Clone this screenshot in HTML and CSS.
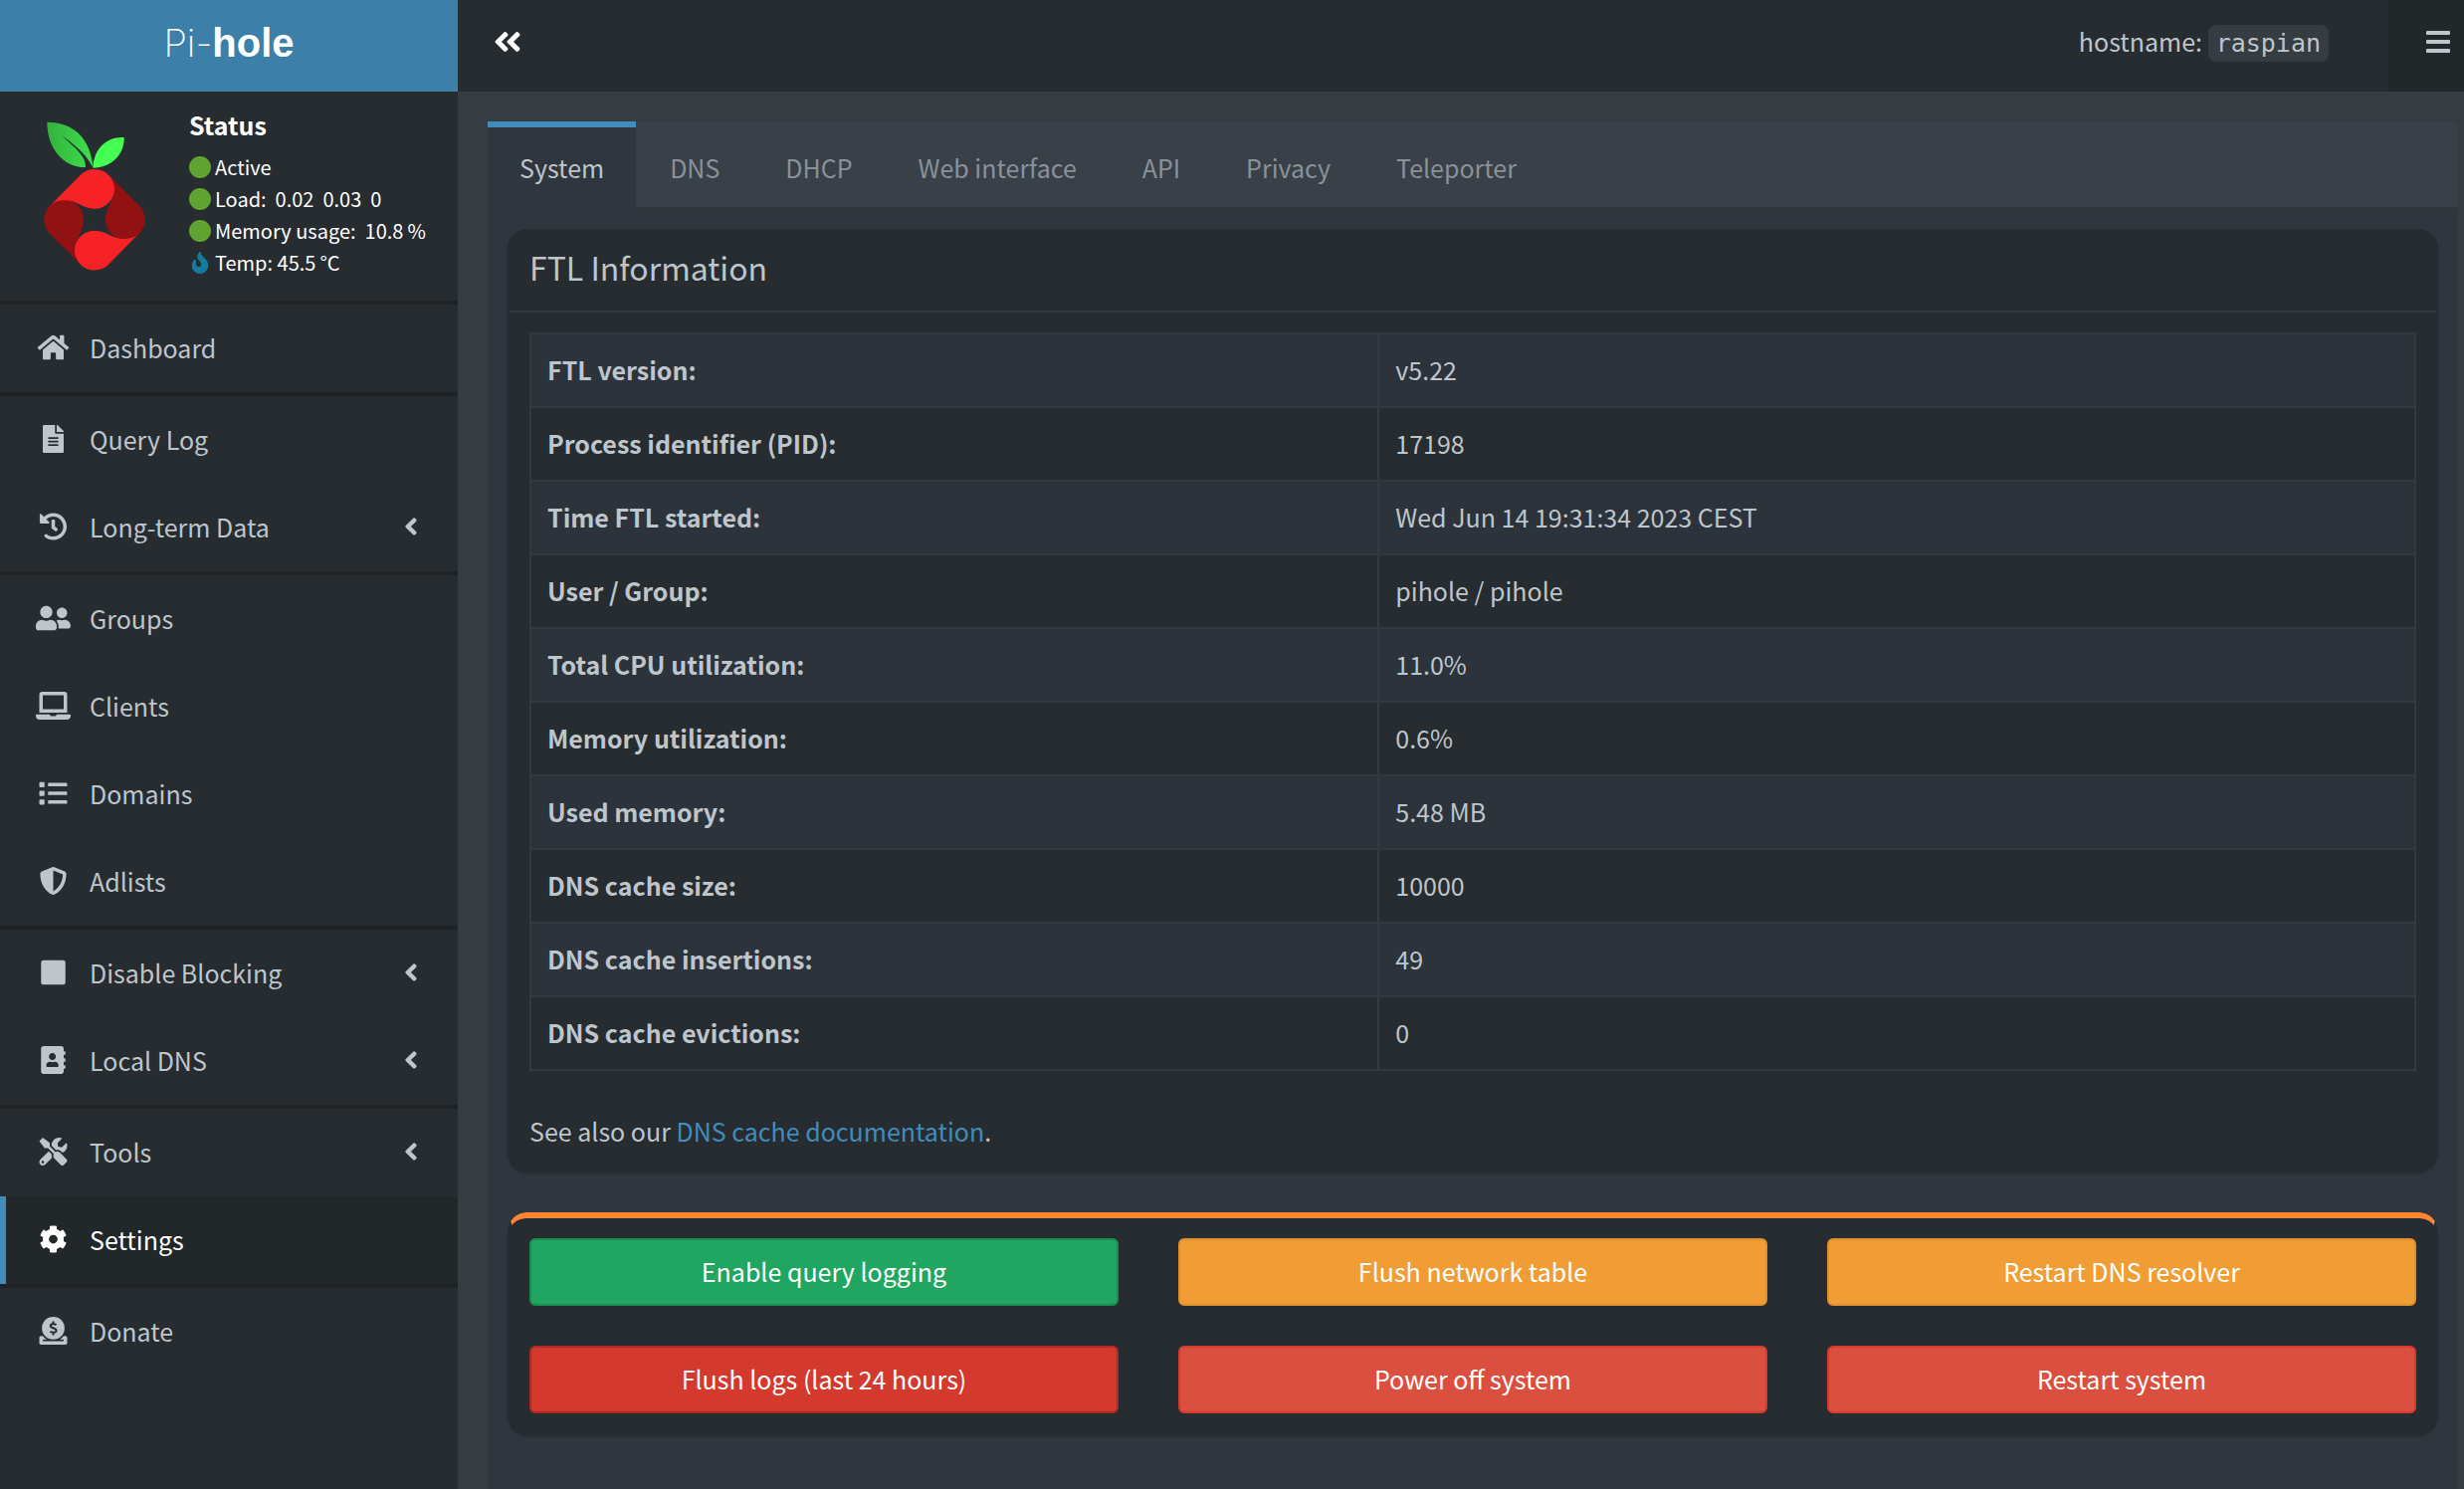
FILE: index.html
```html
<!DOCTYPE html>
<html lang="en">
<head>
  <meta charset="UTF-8" />
  <meta name="viewport" content="width=device-width, initial-scale=1.0">
  <title>Pi-hole - Settings</title>
  <link rel="stylesheet" href="styles.css">
</head>
<body>
  <!-- Shared icons -->
  <svg class="sprite" aria-hidden="true">
    <symbol id="angle-left" viewBox="0 0 256 512">
      <path d="M31.7 239l136-136c9.4-9.4 24.6-9.4 33.9 0l22.6 22.6c9.4 9.4 9.4 24.6 0 33.9L127.9 256l96.4 96.4c9.4 9.4 9.4 24.6 0 33.9L201.7 409c-9.4 9.4-24.6 9.4-33.9 0l-136-136c-9.5-9.4-9.5-24.6-.1-34z"/>
    </symbol>
  </svg>

  <aside class="sidebar">
    <a href="#" class="logo"><span class="logo-thin">Pi-</span><b>hole</b></a>

    <div class="user-panel">
      <svg class="berry" viewBox="0 0 306 450" role="img" aria-label="Pi-hole logo">
        <defs>
          <linearGradient id="leaf">
            <stop offset="0" stop-color="#34b13c"/>
            <stop offset="1" stop-color="#3de04c"/>
          </linearGradient>
          <path id="petal" d="M-135-41L-42-135A60 60 0 0 1 60-93A60 60 0 0 1 0-33C-40-34-50-58-93-58Q-118-58-135-41Z"/>
        </defs>
        <path fill="url(#leaf)" d="M10 2C88 2 142 50 148 139C134 108 100 74 53 42C90 76 128 104 126 138C62 140 10 84 10 2Z"/>
        <path fill="#43ff52" d="M148 140C150 84 188 45 242 48C244 100 203 140 148 140Z"/>
        <g transform="translate(153 296)">
          <use href="#petal" fill="#921113" transform="rotate(90)"/>
          <use href="#petal" fill="#921113" transform="rotate(270)"/>
          <use href="#petal" fill="#f62226"/>
          <use href="#petal" fill="#f62226" transform="rotate(180)"/>
        </g>
      </svg>
      <div class="status">
        <p class="status-title">Status</p>
        <p><i class="dot"></i>Active</p>
        <p><i class="dot"></i>Load:&nbsp;&nbsp;0.02&nbsp;&nbsp;0.03&nbsp;&nbsp;0</p>
        <p><i class="dot"></i>Memory usage:&nbsp;&nbsp;10.8&thinsp;%</p>
        <p><svg class="fire" viewBox="0 0 384 512"><path d="M216 23.86c0-23.8-30.65-32.77-44.15-13.04C48 191.85 224 200 224 288c0 35.63-29.11 64.46-64.85 63.99-35.17-.45-63.15-29.77-63.15-64.94v-85.51c0-21.7-26.47-32.23-41.43-16.5C27.8 213.16 0 261.33 0 320c0 105.87 86.13 192 192 192s192-86.13 192-192c0-170.29-168-193-168-296.14z"/></svg>Temp: 45.5&thinsp;&deg;C</p>
      </div>
    </div>

    <nav>
      <ul class="menu">
        <li><a href="#"><svg viewBox="0 0 576 512"><path d="M280.37 148.26L96 300.11V464a16 16 0 0 0 16 16l112.06-.29a16 16 0 0 0 15.92-16V368a16 16 0 0 1 16-16h64a16 16 0 0 1 16 16v95.64a16 16 0 0 0 16 16.05L464 480a16 16 0 0 0 16-16V300L295.67 148.26a12.19 12.19 0 0 0-15.3 0zM571.6 251.47L488 182.56V44.05a12 12 0 0 0-12-12h-56a12 12 0 0 0-12 12v72.61L318.47 43a48 48 0 0 0-61 0L4.34 251.47a12 12 0 0 0-1.6 16.9l25.5 31A12 12 0 0 0 45.15 301l235.22-193.74a12.19 12.19 0 0 1 15.3 0L530.9 301a12 12 0 0 0 16.9-1.6l25.5-31a12 12 0 0 0-1.7-16.93z"/></svg><span>Dashboard</span></a></li>
      </ul>
      <ul class="menu">
        <li><a href="#"><svg viewBox="0 0 384 512"><path d="M224 136V0H24C10.7 0 0 10.7 0 24v464c0 13.3 10.7 24 24 24h336c13.3 0 24-10.7 24-24V160H248c-13.2 0-24-10.8-24-24zm64 236c0 6.6-5.4 12-12 12H108c-6.6 0-12-5.4-12-12v-8c0-6.6 5.4-12 12-12h168c6.6 0 12 5.4 12 12v8zm0-64c0 6.6-5.4 12-12 12H108c-6.6 0-12-5.4-12-12v-8c0-6.6 5.4-12 12-12h168c6.6 0 12 5.4 12 12v8zm0-72v8c0 6.6-5.4 12-12 12H108c-6.6 0-12-5.4-12-12v-8c0-6.6 5.4-12 12-12h168c6.6 0 12 5.4 12 12zm96-114.1v6.1H256V0h6.1c6.4 0 12.5 2.5 17 7l97.9 98c4.5 4.5 7 10.6 7 16.9z"/></svg><span>Query Log</span></a></li>
        <li><a href="#"><svg viewBox="0 0 512 512"><path d="M504 255.531c.253 136.64-111.18 248.372-247.82 248.468-59.015.042-113.223-20.53-155.822-54.911-11.077-8.94-11.905-25.541-1.839-35.607l11.267-11.267c8.609-8.609 22.353-9.551 31.891-1.984C173.062 425.135 212.781 440 256 440c101.705 0 184-82.311 184-184 0-101.705-82.311-184-184-184-48.814 0-93.149 18.969-126.068 49.932l50.754 50.754c10.08 10.08 2.941 27.314-11.313 27.314H24c-8.837 0-16-7.163-16-16V38.627c0-14.254 17.234-21.393 27.314-11.314l49.372 49.372C129.209 34.136 189.552 8 256 8c136.81 0 247.747 110.78 248 247.531zm-180.912 78.784l9.823-12.63c8.138-10.463 6.253-25.542-4.21-33.679L288 256.349V152c0-13.255-10.745-24-24-24h-16c-13.255 0-24 10.745-24 24v135.651l65.409 50.874c10.463 8.137 25.541 6.253 33.679-4.21z"/></svg><span>Long-term Data</span><svg class="caret"><use href="#angle-left"/></svg></a></li>
      </ul>
      <ul class="menu">
        <li><a href="#"><svg viewBox="0 0 640 512"><path d="M192 256c61.9 0 112-50.1 112-112S253.9 32 192 32 80 82.1 80 144s50.1 112 112 112zm76.8 32h-8.3c-20.8 10-43.9 16-68.5 16s-47.6-6-68.5-16h-8.3C51.6 288 0 339.6 0 403.2V432c0 26.5 21.5 48 48 48h288c26.5 0 48-21.5 48-48v-28.8c0-63.6-51.6-115.2-115.2-115.2zM480 256c53 0 96-43 96-96s-43-96-96-96-96 43-96 96 43 96 96 96zm48 32h-3.8c-13.9 4.8-28.6 8-44.2 8s-30.3-3.2-44.2-8H432c-20.4 0-39.2 5.9-55.7 15.4 24.4 26.3 39.7 61.2 39.7 99.8v38.4c0 2.2-.5 4.3-.6 6.4H592c26.5 0 48-21.5 48-48 0-61.9-50.1-112-112-112z"/></svg><span>Groups</span></a></li>
        <li><a href="#"><svg viewBox="0 0 640 512"><path d="M624 416H381.54c-.74 19.81-14.71 32-32.74 32H288c-18.69 0-33.02-17.47-32.77-32H16c-8.8 0-16 7.2-16 16v16c0 35.2 28.8 64 64 64h512c35.2 0 64-28.8 64-64v-16c0-8.8-7.2-16-16-16zM576 48c0-26.4-21.6-48-48-48H112C85.6 0 64 21.6 64 48v336h512V48zm-64 272H128V64h384v256z"/></svg><span>Clients</span></a></li>
        <li><a href="#"><svg viewBox="0 0 512 512"><path d="M80 368H16a16 16 0 0 0-16 16v64a16 16 0 0 0 16 16h64a16 16 0 0 0 16-16v-64a16 16 0 0 0-16-16zm0-320H16A16 16 0 0 0 0 64v64a16 16 0 0 0 16 16h64a16 16 0 0 0 16-16V64a16 16 0 0 0-16-16zm0 160H16a16 16 0 0 0-16 16v64a16 16 0 0 0 16 16h64a16 16 0 0 0 16-16v-64a16 16 0 0 0-16-16zm416 176H176a16 16 0 0 0-16 16v32a16 16 0 0 0 16 16h320a16 16 0 0 0 16-16v-32a16 16 0 0 0-16-16zm0-320H176a16 16 0 0 0-16 16v32a16 16 0 0 0 16 16h320a16 16 0 0 0 16-16V80a16 16 0 0 0-16-16zm0 160H176a16 16 0 0 0-16 16v32a16 16 0 0 0 16 16h320a16 16 0 0 0 16-16v-32a16 16 0 0 0-16-16z"/></svg><span>Domains</span></a></li>
        <li><a href="#"><svg viewBox="0 0 512 512"><path d="M466.5 83.7l-192-80a48.15 48.15 0 0 0-36.9 0l-192 80C27.7 91.1 16 108.6 16 128c0 198.5 114.5 335.7 221.5 380.3 11.8 4.9 25.1 4.9 36.9 0C360.1 472.6 496 349.3 496 128c0-19.4-11.7-36.9-29.5-44.3zM256.1 446.3l-.1-381 175.9 73.3c-3.3 151.4-82.1 261.1-175.8 307.7z"/></svg><span>Adlists</span></a></li>
      </ul>
      <ul class="menu">
        <li><a href="#"><svg viewBox="0 0 448 512"><rect y="32" width="448" height="448" rx="48"/></svg><span>Disable Blocking</span><svg class="caret"><use href="#angle-left"/></svg></a></li>
        <li><a href="#"><svg viewBox="0 0 448 512"><path d="M436 160c6.6 0 12-5.4 12-12v-40c0-6.6-5.4-12-12-12h-20V48c0-26.5-21.5-48-48-48H48C21.5 0 0 21.5 0 48v416c0 26.5 21.5 48 48 48h320c26.5 0 48-21.5 48-48v-48h20c6.6 0 12-5.4 12-12v-40c0-6.6-5.4-12-12-12h-20v-64h20c6.6 0 12-5.4 12-12v-40c0-6.6-5.4-12-12-12h-20v-64h20zm-228-32c35.3 0 64 28.7 64 64s-28.7 64-64 64-64-28.7-64-64 28.7-64 64-64zm112 236.8c0 10.6-10 19.2-22.4 19.2H118.4C106 384 96 375.4 96 364.8v-19.2c0-31.8 30.1-57.6 67.2-57.6h5c12.3 5.1 25.7 8 39.8 8s27.6-2.9 39.8-8h5c37.1 0 67.2 25.8 67.2 57.6v19.2z"/></svg><span>Local DNS</span><svg class="caret"><use href="#angle-left"/></svg></a></li>
      </ul>
      <ul class="menu">
        <li><a href="#"><svg viewBox="0 0 512 512"><path d="M501.1 395.7L384 278.6c-23.1-23.1-57.6-27.6-85.4-13.9L192 158.1V96L64 0 0 64l96 128h62.1l106.6 106.6c-13.6 27.8-9.2 62.3 13.9 85.4l117.1 117.1c14.6 14.6 38.2 14.6 52.7 0l52.7-52.7c14.5-14.6 14.5-38.2 0-52.7zM331.7 225c28.3 0 54.9 11 74.9 31l19.4 19.4c15.8-6.9 30.8-16.5 43.8-29.5 37.1-37.1 49.7-89.3 37.9-136.7-2.2-9-13.5-12.1-20.1-5.5l-74.4 74.4-67.9-11.3L334 98.9l74.4-74.4c6.6-6.6 3.4-17.9-5.7-20.2-47.4-11.7-99.6.9-136.6 37.9-28.5 28.5-41.9 66.1-41.2 103.6l82.1 82.1c8.1-1.9 16.5-2.9 24.7-2.9zm-103.9 82l-56.7-56.7L18.7 402.8c-25 25-25 65.5 0 90.5s65.5 25 90.5 0l123.6-123.6c-7.6-19.9-9.9-41.6-5-62.7zM64 472c-13.2 0-24-10.8-24-24 0-13.3 10.7-24 24-24s24 10.7 24 24c0 13.2-10.7 24-24 24z"/></svg><span>Tools</span><svg class="caret"><use href="#angle-left"/></svg></a></li>
        <li class="active"><a href="#"><svg viewBox="0 0 512 512"><path d="M487.4 315.7l-42.6-24.6c4.3-23.2 4.3-47 0-70.2l42.6-24.6c4.9-2.8 7.1-8.6 5.5-14-11.1-35.6-30-67.8-54.7-94.6-3.8-4.1-10-5.1-14.8-2.3L380.8 110c-17.9-15.4-38.5-27.3-60.8-35.1V25.8c0-5.6-3.9-10.5-9.4-11.7-36.7-8.2-74.3-7.8-109.2 0-5.5 1.2-9.4 6.1-9.4 11.7V75c-22.2 7.9-42.8 19.8-60.8 35.1L88.7 85.5c-4.9-2.8-11-1.9-14.8 2.3-24.7 26.7-43.6 58.9-54.7 94.6-1.7 5.4.6 11.2 5.5 14L67.3 221c-4.3 23.2-4.3 47 0 70.2l-42.6 24.6c-4.9 2.8-7.1 8.6-5.5 14 11.1 35.6 30 67.8 54.7 94.6 3.8 4.1 10 5.1 14.8 2.3l42.6-24.6c17.9 15.4 38.5 27.3 60.8 35.1v49.2c0 5.6 3.9 10.5 9.4 11.7 36.7 8.2 74.3 7.8 109.2 0 5.5-1.2 9.4-6.1 9.4-11.7v-49.2c22.2-7.9 42.8-19.8 60.8-35.1l42.6 24.6c4.9 2.8 11 1.9 14.8-2.3 24.7-26.7 43.6-58.9 54.7-94.6 1.5-5.5-.7-11.3-5.6-14.1zM256 336c-44.1 0-80-35.9-80-80s35.9-80 80-80 80 35.9 80 80-35.9 80-80 80z"/></svg><span>Settings</span></a></li>
      </ul>
      <ul class="menu">
        <li><a href="#"><svg viewBox="0 0 512 512"><circle cx="256" cy="208" r="208"/><path class="coin-mark" d="M312 148C290 126 206 122 206 168C206 212 312 200 312 250C312 298 222 292 200 266M256 80v48M256 288v48"/><path d="M480 352h-32.5c-19.6 26-44.6 47.7-73 64h63.8c5.3 0 9.6 3.6 9.6 8v16c0 4.4-4.3 8-9.6 8H73.6c-5.3 0-9.6-3.6-9.6-8v-16c0-4.4 4.3-8 9.6-8h63.8c-28.4-16.3-53.3-38-73-64H32c-17.7 0-32 14.3-32 32v96c0 17.7 14.3 32 32 32h448c17.7 0 32-14.3 32-32v-96c0-17.7-14.3-32-32-32z"/></svg><span>Donate</span></a></li>
      </ul>
    </nav>
  </aside>

  <div class="page">
    <header class="navbar">
      <button type="button" class="sidebar-toggle" aria-label="Toggle navigation">
        <svg viewBox="0 0 448 512"><use href="#angle-left" width="256" height="512"/><use href="#angle-left" x="192" width="256" height="512"/></svg>
      </button>
      <div class="hostname">hostname: <code>raspian</code></div>
      <button type="button" class="bars-toggle" aria-label="Open menu">
        <svg viewBox="0 0 24 22"><rect width="24" height="4" rx="1"/><rect y="9" width="24" height="4" rx="1"/><rect y="18" width="24" height="4" rx="1"/></svg>
      </button>
    </header>

    <main class="content">
      <ul class="tabs">
        <li class="active"><a href="#">System</a></li>
        <li><a href="#">DNS</a></li>
        <li><a href="#">DHCP</a></li>
        <li><a href="#">Web interface</a></li>
        <li><a href="#">API</a></li>
        <li><a href="#">Privacy</a></li>
        <li><a href="#">Teleporter</a></li>
      </ul>

      <div class="tab-content">
        <section class="box">
          <h3 class="box-header">FTL Information</h3>
          <div class="box-body">
            <table>
              <tbody>
                <tr><th scope="row">FTL version:</th><td>v5.22</td></tr>
                <tr><th scope="row">Process identifier (PID):</th><td>17198</td></tr>
                <tr><th scope="row">Time FTL started:</th><td>Wed Jun 14 19:31:34 2023 CEST</td></tr>
                <tr><th scope="row">User / Group:</th><td>pihole / pihole</td></tr>
                <tr><th scope="row">Total CPU utilization:</th><td>11.0%</td></tr>
                <tr><th scope="row">Memory utilization:</th><td>0.6%</td></tr>
                <tr><th scope="row">Used memory:</th><td>5.48 MB</td></tr>
                <tr><th scope="row">DNS cache size:</th><td>10000</td></tr>
                <tr><th scope="row">DNS cache insertions:</th><td>49</td></tr>
                <tr><th scope="row">DNS cache evictions:</th><td>0</td></tr>
              </tbody>
            </table>
            <p class="see-also">See also our <a href="#">DNS cache documentation</a>.</p>
          </div>
        </section>

        <section class="box box-warning">
          <div class="actions">
            <button type="button" class="btn btn-green">Enable query logging</button>
            <button type="button" class="btn btn-orange">Flush network table</button>
            <button type="button" class="btn btn-orange">Restart DNS resolver</button>
            <button type="button" class="btn btn-red-dark">Flush logs (last 24 hours)</button>
            <button type="button" class="btn btn-red">Power off system</button>
            <button type="button" class="btn btn-red">Restart system</button>
          </div>
        </section>
      </div>
    </main>
  </div>
</body>
</html>
```
FILE: styles.css
```css
* {
  box-sizing: border-box;
}

body {
  margin: 0;
  display: flex;
  min-height: 100vh;
  background-color: #353c42;
  color: #bec5cb;
  font-family: "Noto Sans CJK SC", "Noto Sans", sans-serif;
  font-size: 25px;
  line-height: 40px;
}

ul, p, h3 {
  margin: 0;
  padding: 0;
  list-style: none;
}

a {
  color: #418cba;
  text-decoration: none;
}

button {
  font: inherit;
  cursor: pointer;
}

svg {
  fill: currentColor;
}

.sprite {
  position: absolute;
  width: 0;
  height: 0;
}

/* Sidebar */
.sidebar {
  flex: 0 0 460px;
  background-color: #272c30;
}

.logo {
  display: flex;
  justify-content: center;
  align-items: center;
  height: 92px;
  padding-bottom: 6px;
  background-color: #3c7fa8;
  color: white;
  font-family: "Liberation Sans", sans-serif;
  font-size: 40px;
}

.logo-thin {
  font-family: Inter, Roboto, sans-serif;
  font-size: 38px;
  font-weight: 200;
}

.user-panel {
  display: flex;
  gap: 44px;
  height: 210px;
  padding: 14px 20px 0 44px;
  color: white;
}

.berry {
  flex: none;
  width: 102px;
  height: 150px;
  margin-top: 16px;
}

.status {
  font-size: 20px;
  line-height: 32px;
  white-space: nowrap;
}

.status p {
  display: flex;
  align-items: center;
}

.status .status-title {
  padding-bottom: 8px;
  font-size: 25px;
  font-weight: bold;
  line-height: 38px;
}

.dot {
  width: 22px;
  height: 22px;
  margin-right: 4px;
  border-radius: 50%;
  background-color: #60a330;
}

.fire {
  width: 22px;
  height: 22px;
  margin-right: 4px;
  color: #167c9c;
}

.menu {
  border-top: 4px solid #1e2225;
}

.menu a {
  display: flex;
  align-items: center;
  height: 88px;
  padding: 0 40px 2px 30px;
  border-left: 6px solid transparent;
  color: #bec5cb;
}

.menu svg {
  width: 35px;
  height: 28px;
  margin-right: 19px;
}

.menu .caret {
  width: 14px;
  margin: 0 0 0 auto;
}

.menu .active a {
  border-left-color: #418cba;
  background-color: #22272a;
  color: white;
}

.coin-mark {
  fill: none;
  stroke: #272c30;
  stroke-width: 36;
}

/* Top bar */
.page {
  flex: 1;
  display: flex;
  flex-direction: column;
  min-width: 0;
}

.navbar {
  display: flex;
  align-items: center;
  height: 92px;
  background-color: #272c30;
}

.sidebar-toggle {
  display: flex;
  padding: 26px 36px 34px;
  border: none;
  background: none;
  color: white;
}

.sidebar-toggle svg {
  width: 28px;
  height: 32px;
}

.hostname {
  margin-left: auto;
  margin-right: 60px;
  padding-bottom: 8px;
}

.hostname code {
  padding: 4px 8px;
  border-radius: 8px;
  background-color: #353c42;
  font-family: "DejaVu Sans Mono", monospace;
}

.bars-toggle {
  height: 92px;
  padding: 0 14px 8px 38px;
  border: none;
  background-color: #22282a;
  color: #bec5cb;
}

.bars-toggle svg {
  display: block;
  width: 24px;
  height: 22px;
}

/* Tabs */
.content {
  flex: 1;
  margin: 30px 6px 0 30px;
  border-radius: 6px 6px 0 0;
  background-color: #30363d;
}

.tabs {
  display: flex;
  gap: 2px;
  border-bottom: 2px solid #31373a;
  border-radius: 0 6px 0 0;
  background-color: #394047;
}

.tabs a {
  display: block;
  height: 86px;
  padding: 20px 32px 0;
  border-top: 6px solid transparent;
  color: #89919a;
}

.tabs .active a {
  border-top-color: #418cba;
  background-color: #30363d;
  color: #bec5cb;
}

.tabs .active {
  margin-bottom: -2px;
  background-color: #30363d;
}

.tab-content {
  padding: 20px;
}

/* Boxes */
.box {
  border: 2px solid #272c30;
  border-radius: 20px;
  background-color: #272c30;
  box-shadow: 0 2px 2px rgba(0, 0, 0, 0.1);
}

.box-warning {
  margin-top: 40px;
  border-top: 6px solid #ff8731;
}

.box-header {
  padding: 16px 20px 24px;
  border-bottom: 2px solid #353a3f;
  font-size: 32px;
  font-weight: normal;
}

.box-body {
  padding: 20px;
}

table {
  width: 100%;
  border-collapse: collapse;
}

th, td {
  height: 74px;
  padding: 0 16px 2px;
  border: 2px solid #353a3f;
  text-align: left;
}

th {
  width: 45%;
}

tr:nth-child(odd) {
  background-color: #2c333b;
}

.see-also {
  margin-top: 40px;
}

.actions {
  display: grid;
  grid-template-columns: repeat(3, 1fr);
  gap: 40px 60px;
  padding: 20px;
}

.btn {
  height: 68px;
  padding-bottom: 4px;
  border: 2px solid;
  border-radius: 6px;
  color: white;
}

.btn-green {
  background-color: #21a661;
  border-color: #1a8e51;
}

.btn-orange {
  background-color: #f09d36;
  border-color: #df8f2d;
}

.btn-red {
  background-color: #db4f40;
  border-color: #d23b2e;
}

.btn-red-dark {
  background-color: #d33a2d;
  border-color: #aa2c29;
}
```
